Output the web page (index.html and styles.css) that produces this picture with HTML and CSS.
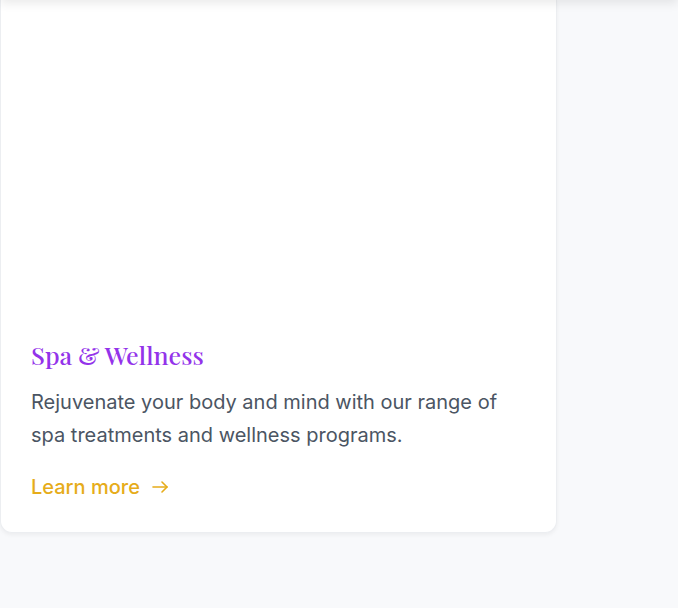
FILE: index.html
```html
<!DOCTYPE html>
<html lang="en">
<head>
<meta charset="utf-8">
<title>Spa &amp; Wellness</title>
<link rel="stylesheet" href="styles.css">
</head>
<body>
<div class="topbar"></div>
<main class="page">
  <article class="card">
    <div class="card-media"></div>
    <div class="card-body">
      <h3 class="card-title">Spa &amp; Wellness</h3>
      <p class="card-text">Rejuvenate your body and mind with our range of spa treatments and wellness programs.</p>
      <a class="card-link" href="#">Learn more
        <svg class="arrow" width="16" height="12" viewBox="0 0 16 12" fill="none" stroke="currentColor" stroke-width="1.6" stroke-linecap="round" stroke-linejoin="round"><path d="M1 6h14"/><path d="M10 1l5 5-5 5"/></svg>
      </a>
    </div>
  </article>
</main>
</body>
</html>
```
FILE: styles.css
```css
* { box-sizing: border-box; }
html, body { margin: 0; padding: 0; }
body {
  background: #f8f9fb;
  font-family: Inter, "Noto Sans", "Liberation Sans", sans-serif;
  height: 608px;
  overflow: hidden;
}
.topbar {
  position: fixed;
  top: -40px;
  left: 0;
  right: 0;
  height: 40px;
  background: #fff;
  box-shadow: 0 3px 10px rgba(0, 0, 0, 0.09);
  z-index: 10;
}
.page {
  display: flex;
  flex-direction: column;
  align-items: flex-start;
}
.card {
  width: 557px;
  background: #fff;
  border: 1px solid #eceef1;
  border-top: none;
  border-radius: 0 0 12px 12px;
  box-shadow: 0 2px 4px rgba(0, 0, 0, 0.05);
  display: flex;
  flex-direction: column;
}
.card-media {
  height: 308px;
}
.card-body {
  padding: 30px 30px 31px 30px;
  display: flex;
  flex-direction: column;
  align-items: flex-start;
}
.card-title {
  margin: 0 0 14px 0;
  font-family: "Playfair Display", "Liberation Serif", "DejaVu Serif", serif;
  font-weight: 500;
  font-size: 25px;
  line-height: 34px;
  color: #9333ea;
}
.card-text {
  margin: 0 0 21px 0;
  font-size: 20px;
  line-height: 33px;
  color: #4b5563;
}
.card-link {
  display: inline-flex;
  align-items: center;
  gap: 12px;
  font-size: 20px;
  line-height: 28px;
  font-weight: 500;
  color: #e6ac1a;
  text-decoration: none;
}
.arrow { display: block; }
```
